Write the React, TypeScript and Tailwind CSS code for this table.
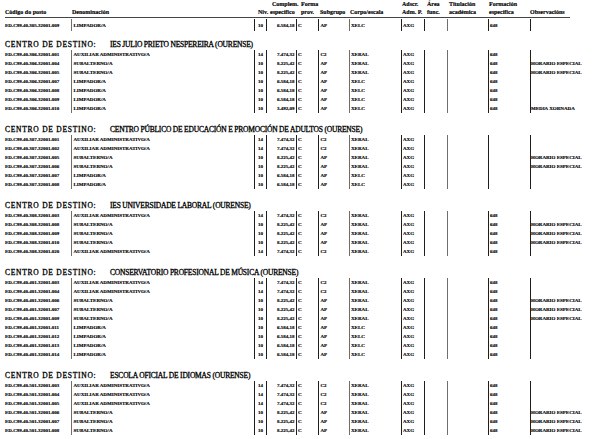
type Row = {
  code: string;
  denom: string;
  niv: string;
  comp: string;
  sub: string;
  corpo: string;
  form: string;
  obs: string;
};

const AUX = "AUXILIAR ADMINISTRATIVO/A";
const SUB = "SUBALTERNO/A";
const LIMP = "LIMPADOR/A";
const HE = "HORARIO ESPECIAL";

function aux(code: string, form = "648"): Row {
  return { code, denom: AUX, niv: "14", comp: "7.474,32", sub: "C2", corpo: "XERAL", form, obs: "" };
}
function sub(code: string, form = "648"): Row {
  return { code, denom: SUB, niv: "10", comp: "8.225,42", sub: "AP", corpo: "XERAL", form, obs: HE };
}
function limp(code: string, form = "648", comp = "6.584,18", obs = ""): Row {
  return { code, denom: LIMP, niv: "10", comp, sub: "AP", corpo: "XELC", form, obs };
}

const first: Row = limp("ED.C99.40.305.32001.009");

const sections: { name: string; rows: Row[] }[] = [
  {
    name: "IES JULIO PRIETO NESPEREIRA (OURENSE)",
    rows: [
      aux("ED.C99.40.306.32001.001"),
      sub("ED.C99.40.306.32001.004"),
      sub("ED.C99.40.306.32001.005"),
      limp("ED.C99.40.306.32001.007"),
      limp("ED.C99.40.306.32001.008"),
      limp("ED.C99.40.306.32001.009"),
      limp("ED.C99.40.306.32001.010", "648", "3.492,09", "MEDIA XORNADA"),
    ],
  },
  {
    name: "CENTRO PÚBLICO DE EDUCACIÓN E PROMOCIÓN DE ADULTOS (OURENSE)",
    rows: [
      aux("ED.C99.40.307.32001.001", ""),
      aux("ED.C99.40.307.32001.002", ""),
      sub("ED.C99.40.307.32001.005", ""),
      sub("ED.C99.40.307.32001.006", ""),
      limp("ED.C99.40.307.32001.007", ""),
      limp("ED.C99.40.307.32001.008", ""),
    ],
  },
  {
    name: "IES UNIVERSIDADE LABORAL (OURENSE)",
    rows: [
      aux("ED.C99.40.308.32001.003"),
      sub("ED.C99.40.308.32001.008"),
      sub("ED.C99.40.308.32001.009"),
      sub("ED.C99.40.308.32001.010"),
      aux("ED.C99.40.308.32001.020"),
    ],
  },
  {
    name: "CONSERVATORIO PROFESIONAL DE MÚSICA (OURENSE)",
    rows: [
      aux("ED.C99.40.401.32001.003"),
      aux("ED.C99.40.401.32001.004"),
      sub("ED.C99.40.401.32001.006"),
      sub("ED.C99.40.401.32001.007"),
      sub("ED.C99.40.401.32001.009"),
      limp("ED.C99.40.401.32001.011"),
      limp("ED.C99.40.401.32001.012"),
      limp("ED.C99.40.401.32001.013"),
      limp("ED.C99.40.401.32001.014"),
    ],
  },
  {
    name: "ESCOLA OFICIAL DE IDIOMAS (OURENSE)",
    rows: [
      aux("ED.C99.40.501.32001.003"),
      aux("ED.C99.40.501.32001.004"),
      aux("ED.C99.40.501.32001.005"),
      sub("ED.C99.40.501.32001.006"),
      sub("ED.C99.40.501.32001.007"),
      sub("ED.C99.40.501.32001.008"),
    ],
  },
];

// dark and greyish rules, like the scanned page
const dark = "border-l border-[#1e1e1e]";
const grey = "border-l-[1.5px] border-[#6e6e6e]";

function DataRow({ r, tall }: { r: Row; tall?: boolean }) {
  return (
    <div className={`flex items-center whitespace-nowrap ${tall ? "h-[12px]" : "h-[9px]"}`}>
      <div className="w-[66px]">{r.code}</div>
      <div className={`w-[183px] h-full flex items-center pl-[1.5px] ${grey}`}>{r.denom}</div>
      <div className={`w-[12px] h-full flex items-center justify-center ${dark}`}>{r.niv}</div>
      <div className={`w-[30px] h-full flex items-center justify-end pr-[1.5px] ${dark}`}>{r.comp}</div>
      <div className={`w-[22px] h-full flex items-center pl-[1px] ${dark}`}>C</div>
      <div className={`w-[31px] h-full flex items-center pl-[1.5px] ${dark}`}>{r.sub}</div>
      <div className={`w-[52px] h-full flex items-center pl-[1px] ${grey}`}>{r.corpo}</div>
      <div className={`w-[23px] h-full flex items-center pl-[1px] ${dark}`}>AXG</div>
      <div className={`w-[23px] h-full ${dark}`} />
      <div className={`w-[41px] h-full ${grey}`} />
      <div className={`w-[42px] h-full flex items-center pl-[1px] ${dark}`}>{r.form}</div>
      <div className={`flex-1 h-full flex items-center ${dark}`}>{r.obs}</div>
    </div>
  );
}

function Heading({ name, first }: { name: string; first?: boolean }) {
  return (
    <div
      className={`flex items-center h-[10px] whitespace-nowrap text-[7.5px] font-normal text-black [-webkit-text-stroke:0.3px_#000] ${first ? "mt-[9px]" : "mt-[12px]"}`}
      style={{ fontFamily: '"Liberation Serif", "Times New Roman", serif' }}
    >
      <span className="w-[105px] tracking-[0.75px]">CENTRO DE DESTINO:</span>
      <span className="tracking-[-0.2px]">{name}</span>
    </div>
  );
}

function Head({ top, bottom, w, pt = "pl-0" }: { top?: string; bottom: string; w: string; pt?: string }) {
  return (
    <div className={`${w} flex flex-col leading-[8px] whitespace-nowrap`}>
      <span className={`h-[8px] ${pt}`}>{top ?? ""}</span>
      <span className="h-[8px]">{bottom}</span>
    </div>
  );
}

export default function App() {
  return (
    <div
      className="w-[615px] h-[439px] overflow-hidden bg-white text-black pl-[5px]"
      style={{ fontFamily: '"Liberation Serif", "Times New Roman", serif' }}
    >
      <div className="flex w-[565px] h-[17.5px] border-b-[1.5px] border-[#444] text-[6px] font-bold [-webkit-text-stroke:0.15px_#000]">
        <Head w="w-[67px]" bottom="Código do posto" />
        <Head w="w-[186px]" bottom="Denominación" />
        <Head w="w-[12px]" bottom="Niv." />
        <Head w="w-[31px]" pt="pl-[2px]" top="Complem." bottom="específico" />
        <Head w="w-[19px]" top="Forma" bottom="prov." />
        <Head w="w-[30px]" bottom="Subgrupo" />
        <Head w="w-[52px]" bottom="Corpo/escala" />
        <Head w="w-[25px]" top="Adscr." bottom="Adm. P." />
        <Head w="w-[22px]" top="Área" bottom="func." />
        <Head w="w-[40px]" top="Titulación" bottom="académica" />
        <Head w="w-[41px]" top="Formación" bottom="específica" />
        <Head w="w-[40px]" bottom="Observacións" />
      </div>

      <div className="text-[5px] font-bold leading-none [-webkit-text-stroke:0.15px_#000]">
        <div className="mt-[1.5px]">
          <DataRow r={first} tall />
        </div>
        {sections.map((s, i) => (
          <div key={s.name}>
            <Heading name={s.name} first={i === 0} />
            {s.rows.map((r) => (
              <DataRow key={r.code} r={r} />
            ))}
          </div>
        ))}
      </div>
    </div>
  );
}
